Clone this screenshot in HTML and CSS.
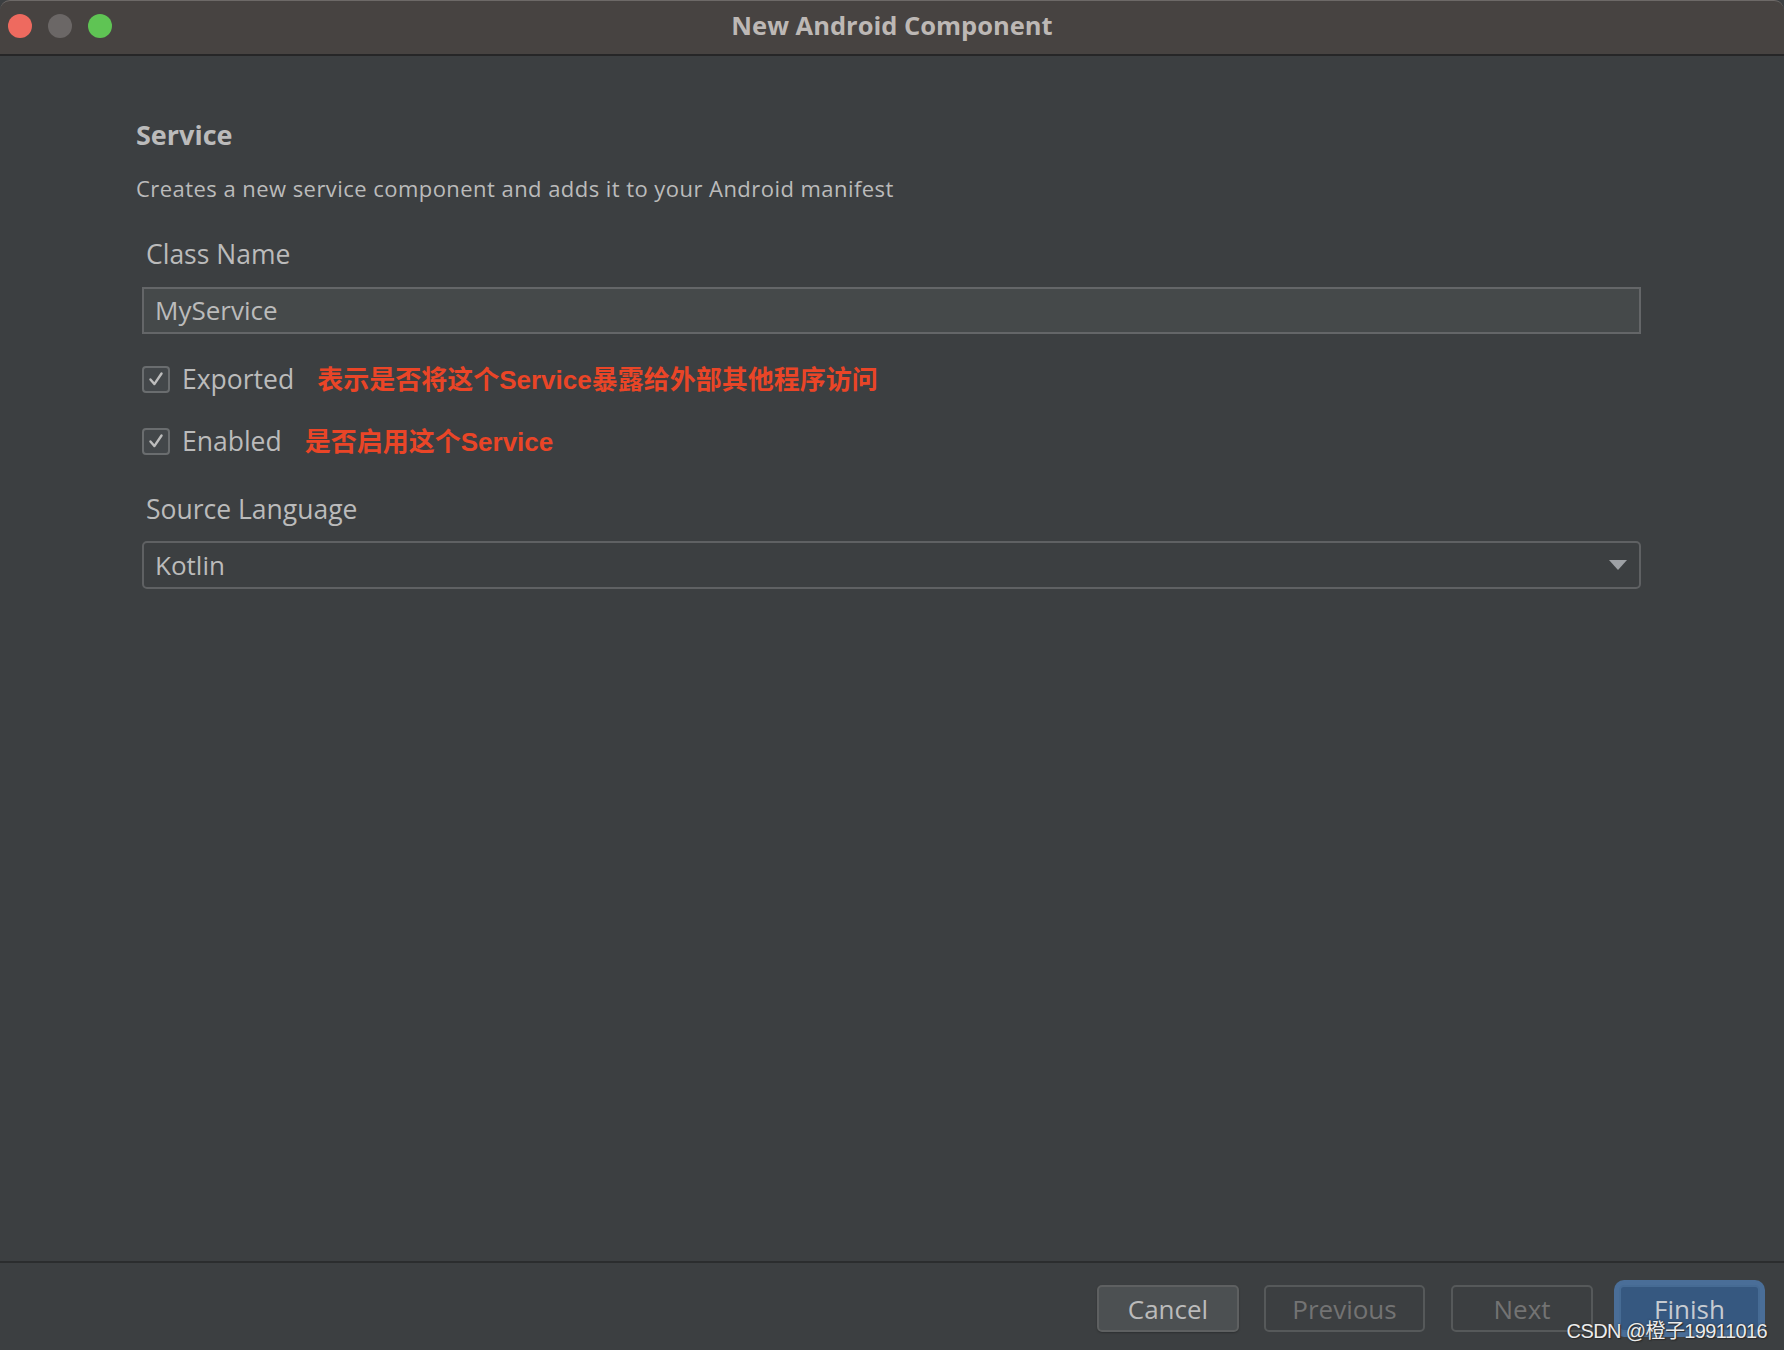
FILE: index.html
```html
<!DOCTYPE html>
<html lang="en">
<head>
<meta charset="utf-8">
<title>New Android Component</title>
<link rel="stylesheet" href="styles.css">
</head>
<body>
<div class="window">
  <header class="titlebar">
    <div class="lights">
      <span class="light red"></span>
      <span class="light gray"></span>
      <span class="light green"></span>
    </div>
    <div class="title">New Android Component</div>
  </header>

  <main class="content">
    <h1 class="heading">Service</h1>
    <p class="desc">Creates a new service component and adds it to your Android manifest</p>

    <label class="field-label">Class Name</label>
    <div class="textfield">MyService</div>

    <div class="check-row first">
      <span class="checkbox">
        <svg viewBox="0 0 26 26" width="26" height="26"><path d="M7 13.5 L11.2 18.5 L19 7" fill="none" stroke="#bdbdbd" stroke-width="2.6" stroke-linecap="round" stroke-linejoin="round"/></svg>
      </span>
      <span class="check-label">Exported</span>
      <span class="note note-a">表示是否将这个<span class="latin">Service</span>暴露给外部其他程序访问</span>
    </div>

    <div class="check-row">
      <span class="checkbox">
        <svg viewBox="0 0 26 26" width="26" height="26"><path d="M7 13.5 L11.2 18.5 L19 7" fill="none" stroke="#bdbdbd" stroke-width="2.6" stroke-linecap="round" stroke-linejoin="round"/></svg>
      </span>
      <span class="check-label">Enabled</span>
      <span class="note note-b">是否启用这个<span class="latin">Service</span></span>
    </div>

    <label class="field-label lang">Source Language</label>
    <div class="combo">
      <span>Kotlin</span>
      <svg class="arrow" viewBox="0 0 18 10" width="18" height="10"><path d="M0 0 H18 L9 10 Z" fill="#9ea1a5"/></svg>
    </div>
  </main>

  <footer class="footer">
    <button class="btn cancel">Cancel</button>
    <button class="btn disabled prev">Previous</button>
    <button class="btn disabled next">Next</button>
    <button class="btn primary">Finish</button>
  </footer>

  <div class="watermark">CSDN @橙子19911016</div>
</div>
</body>
</html>
```

FILE: styles.css
```css
* { box-sizing: border-box; }

html, body {
  margin: 0;
  padding: 0;
  background: #3c3f41;
}

body {
  width: 1784px;
  height: 1350px;
  overflow: hidden;
  font-family: "Open Sans", "Noto Sans", "Noto Sans CJK SC", sans-serif;
  color: #bbbbbb;
}

.window {
  position: relative;
  width: 1784px;
  height: 1350px;
  display: flex;
  flex-direction: column;
  background: #3c3f41;
}

/* ---------- title bar ---------- */
.titlebar {
  height: 56px;
  flex: none;
  background: #474341;
  border-top: 1px solid #6d6967;
  border-bottom: 2px solid #262627;
  border-radius: 10px 10px 0 0;
  display: flex;
  align-items: center;
  position: relative;
}

.lights {
  display: flex;
  gap: 16px;
  padding-left: 8px;
  margin-top: -3px;
}

.light {
  width: 24px;
  height: 24px;
  border-radius: 50%;
  display: block;
}
.light.red { background: #ee6a5f; }
.light.gray { background: #6b6766; }
.light.green { background: #5fc454; }

.title {
  position: absolute;
  left: 0;
  right: 0;
  top: 7px;
  text-align: center;
  font-family: "Open Sans", "Liberation Sans", sans-serif;
  font-weight: 700;
  font-size: 25.5px;
  line-height: 34px;
  color: #bdb8b5;
}

/* ---------- content ---------- */
.content {
  flex: 1;
  padding: 63px 143px 0 136px;
  display: flex;
  flex-direction: column;
}

.heading {
  margin: 0;
  font-size: 27px;
  line-height: 32px;
  font-weight: 700;
  color: #bbbbbb;
}

.desc {
  margin: 23px 0 0;
  font-size: 22px;
  line-height: 28px;
  letter-spacing: 0.45px;
  color: #bbbbbb;
}

.field-label {
  display: block;
  margin: 35px 0 0 10px;
  font-size: 26.5px;
  line-height: 34px;
  color: #bbbbbb;
}

.field-label.lang { margin-top: 31px; }

.textfield {
  margin: 16px 0 0 6px;
  height: 47px;
  background: #45494a;
  border: 2px solid #646668;
  padding: 0 11px;
  font-size: 26px;
  line-height: 43px;
  color: #bbbbbb;
}

.check-row {
  margin: 22px 0 0 6px;
  height: 40px;
  display: flex;
  align-items: center;
}
.check-row.first { margin-top: 25px; }

.checkbox {
  width: 28px;
  height: 27px;
  border: 2px solid #6a6d6f;
  border-radius: 4px;
  background: #43474a;
  display: flex;
  align-items: center;
  justify-content: center;
  flex: none;
}
.checkbox svg { display: block; }

.check-label {
  margin-left: 12px;
  font-size: 26.5px;
  line-height: 34px;
  color: #bbbbbb;
}

.note {
  font-family: "Noto Sans CJK SC", "Noto Sans", sans-serif;
  font-weight: 700;
  font-size: 26px;
  line-height: 34px;
  color: #ea4527;
}
.note-a { margin-left: 23px; }
.note-b { margin-left: 23px; }
.note .latin {
  font-family: "Liberation Sans", "Noto Sans", sans-serif;
  font-weight: 700;
}

.combo {
  margin: 15px 0 0 6px;
  height: 48px;
  border: 2px solid #5f6163;
  border-radius: 5px;
  padding: 0 11px;
  display: flex;
  align-items: center;
  justify-content: space-between;
  font-size: 26px;
  color: #bbbbbb;
}
.combo .arrow { display: block; margin-right: 1px; }

/* ---------- footer ---------- */
.footer {
  flex: none;
  height: 89px;
  border-top: 2px solid #2b2d2e;
  padding: 22px 24px 0 0;
  display: flex;
  justify-content: flex-end;
  align-items: flex-start;
  gap: 25px;
}

.btn {
  height: 47px;
  border-radius: 5px;
  border: 2px solid #5e6061;
  background: transparent;
  font-family: "Open Sans", "Noto Sans", sans-serif;
  font-size: 26px;
  line-height: 40px;
  padding: 0;
  color: #bbbbbb;
}

.btn.cancel {
  width: 142px;
  background: #4c5052;
  box-shadow: 0 1px 2px rgba(0,0,0,0.25);
}
.btn.disabled { color: #737373; border-color: #56595a; }
.btn.prev { width: 161px; }
.btn.next { width: 142px; margin-left: 1px; }

.btn.primary {
  width: 141px;
  margin-left: 1px;
  background: #365880;
  border-color: #466b94;
  color: #c6cbd1;
  box-shadow: 0 0 0 5px #4a6e98;
}

/* ---------- watermark overlay ---------- */
.watermark {
  position: absolute;
  right: 17px;
  bottom: 5px;
  font-family: "Liberation Sans", "Noto Sans CJK SC", sans-serif;
  font-size: 20px;
  line-height: 28px;
  color: #ececec;
  text-shadow: 0 0 2px #2a2a2a, 1px 1px 1px #2a2a2a;
  letter-spacing: -0.6px;
}
```
